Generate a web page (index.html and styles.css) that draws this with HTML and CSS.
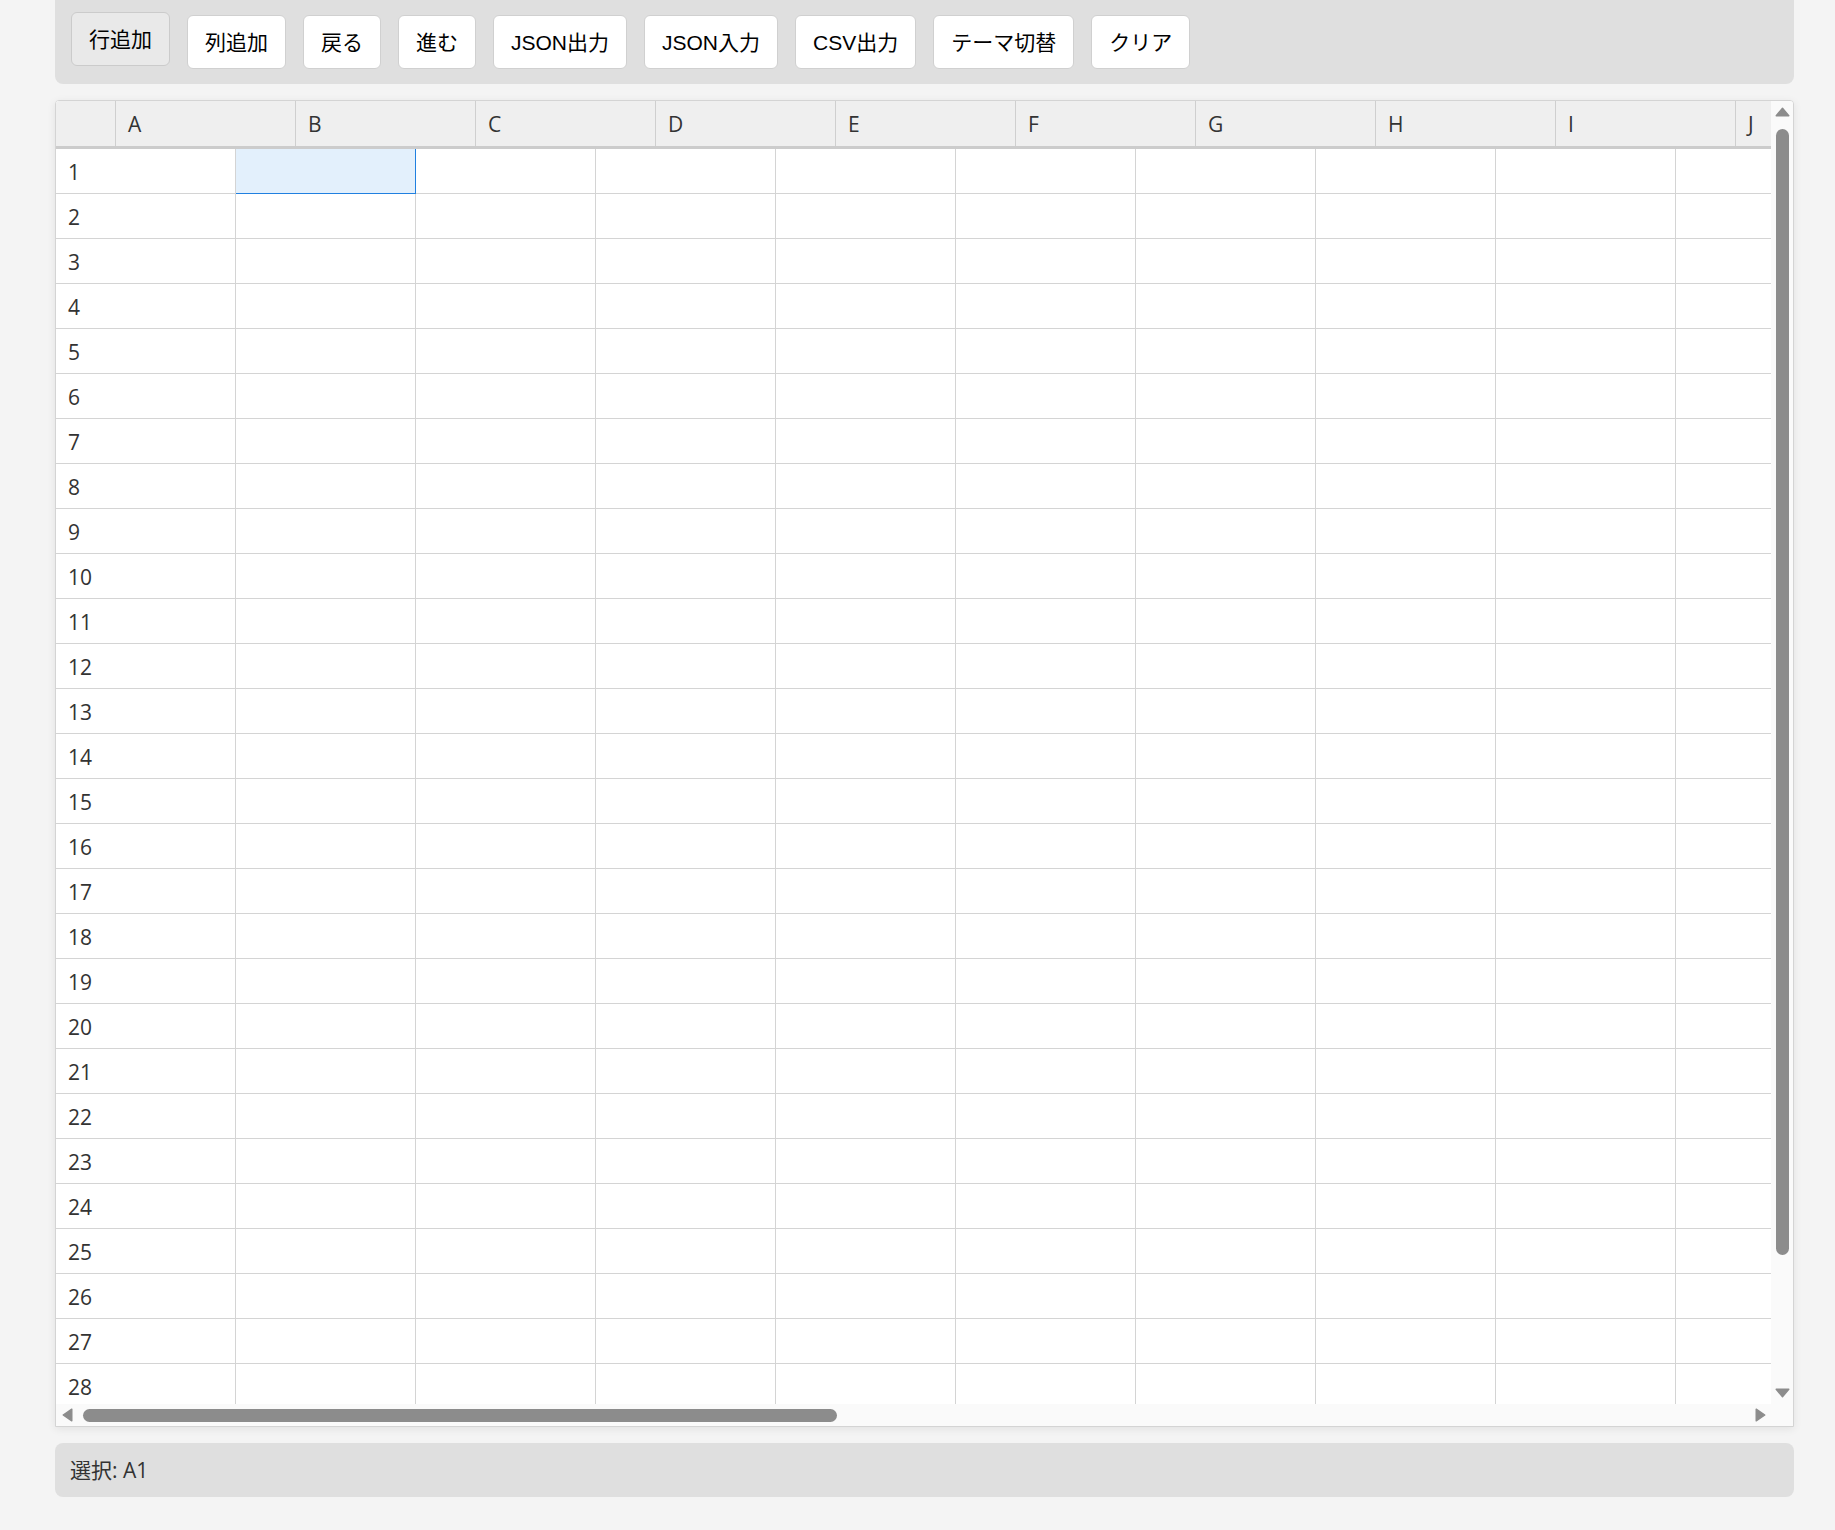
FILE: index.html
```html
<!DOCTYPE html>
<html lang="ja">
<head>
<meta charset="utf-8">
<title>スプレッドシート</title>
<link rel="stylesheet" href="styles.css">
</head>
<body>
<div class="app">
  <div class="toolbar">
    <button class="btn is-pressed">行追加</button>
    <button class="btn">列追加</button>
    <button class="btn">戻る</button>
    <button class="btn">進む</button>
    <button class="btn">JSON出力</button>
    <button class="btn">JSON入力</button>
    <button class="btn">CSV出力</button>
    <button class="btn">テーマ切替</button>
    <button class="btn">クリア</button>
  </div>

  <div class="sheet">
    <div class="viewport">
      <div class="head">
        <div class="corner"></div>
        <div class="hcell">A</div><div class="hcell">B</div><div class="hcell">C</div><div class="hcell">D</div><div class="hcell">E</div><div class="hcell">F</div><div class="hcell">G</div><div class="hcell">H</div><div class="hcell">I</div><div class="hcell">J</div>
      </div>
      <div class="row"><div class="rnum">1</div><div class="cell sel"></div><div class="cell"></div><div class="cell"></div><div class="cell"></div><div class="cell"></div><div class="cell"></div><div class="cell"></div><div class="cell"></div><div class="cell"></div><div class="cell"></div></div>
      <div class="row"><div class="rnum">2</div><div class="cell"></div><div class="cell"></div><div class="cell"></div><div class="cell"></div><div class="cell"></div><div class="cell"></div><div class="cell"></div><div class="cell"></div><div class="cell"></div><div class="cell"></div></div>
      <div class="row"><div class="rnum">3</div><div class="cell"></div><div class="cell"></div><div class="cell"></div><div class="cell"></div><div class="cell"></div><div class="cell"></div><div class="cell"></div><div class="cell"></div><div class="cell"></div><div class="cell"></div></div>
      <div class="row"><div class="rnum">4</div><div class="cell"></div><div class="cell"></div><div class="cell"></div><div class="cell"></div><div class="cell"></div><div class="cell"></div><div class="cell"></div><div class="cell"></div><div class="cell"></div><div class="cell"></div></div>
      <div class="row"><div class="rnum">5</div><div class="cell"></div><div class="cell"></div><div class="cell"></div><div class="cell"></div><div class="cell"></div><div class="cell"></div><div class="cell"></div><div class="cell"></div><div class="cell"></div><div class="cell"></div></div>
      <div class="row"><div class="rnum">6</div><div class="cell"></div><div class="cell"></div><div class="cell"></div><div class="cell"></div><div class="cell"></div><div class="cell"></div><div class="cell"></div><div class="cell"></div><div class="cell"></div><div class="cell"></div></div>
      <div class="row"><div class="rnum">7</div><div class="cell"></div><div class="cell"></div><div class="cell"></div><div class="cell"></div><div class="cell"></div><div class="cell"></div><div class="cell"></div><div class="cell"></div><div class="cell"></div><div class="cell"></div></div>
      <div class="row"><div class="rnum">8</div><div class="cell"></div><div class="cell"></div><div class="cell"></div><div class="cell"></div><div class="cell"></div><div class="cell"></div><div class="cell"></div><div class="cell"></div><div class="cell"></div><div class="cell"></div></div>
      <div class="row"><div class="rnum">9</div><div class="cell"></div><div class="cell"></div><div class="cell"></div><div class="cell"></div><div class="cell"></div><div class="cell"></div><div class="cell"></div><div class="cell"></div><div class="cell"></div><div class="cell"></div></div>
      <div class="row"><div class="rnum">10</div><div class="cell"></div><div class="cell"></div><div class="cell"></div><div class="cell"></div><div class="cell"></div><div class="cell"></div><div class="cell"></div><div class="cell"></div><div class="cell"></div><div class="cell"></div></div>
      <div class="row"><div class="rnum">11</div><div class="cell"></div><div class="cell"></div><div class="cell"></div><div class="cell"></div><div class="cell"></div><div class="cell"></div><div class="cell"></div><div class="cell"></div><div class="cell"></div><div class="cell"></div></div>
      <div class="row"><div class="rnum">12</div><div class="cell"></div><div class="cell"></div><div class="cell"></div><div class="cell"></div><div class="cell"></div><div class="cell"></div><div class="cell"></div><div class="cell"></div><div class="cell"></div><div class="cell"></div></div>
      <div class="row"><div class="rnum">13</div><div class="cell"></div><div class="cell"></div><div class="cell"></div><div class="cell"></div><div class="cell"></div><div class="cell"></div><div class="cell"></div><div class="cell"></div><div class="cell"></div><div class="cell"></div></div>
      <div class="row"><div class="rnum">14</div><div class="cell"></div><div class="cell"></div><div class="cell"></div><div class="cell"></div><div class="cell"></div><div class="cell"></div><div class="cell"></div><div class="cell"></div><div class="cell"></div><div class="cell"></div></div>
      <div class="row"><div class="rnum">15</div><div class="cell"></div><div class="cell"></div><div class="cell"></div><div class="cell"></div><div class="cell"></div><div class="cell"></div><div class="cell"></div><div class="cell"></div><div class="cell"></div><div class="cell"></div></div>
      <div class="row"><div class="rnum">16</div><div class="cell"></div><div class="cell"></div><div class="cell"></div><div class="cell"></div><div class="cell"></div><div class="cell"></div><div class="cell"></div><div class="cell"></div><div class="cell"></div><div class="cell"></div></div>
      <div class="row"><div class="rnum">17</div><div class="cell"></div><div class="cell"></div><div class="cell"></div><div class="cell"></div><div class="cell"></div><div class="cell"></div><div class="cell"></div><div class="cell"></div><div class="cell"></div><div class="cell"></div></div>
      <div class="row"><div class="rnum">18</div><div class="cell"></div><div class="cell"></div><div class="cell"></div><div class="cell"></div><div class="cell"></div><div class="cell"></div><div class="cell"></div><div class="cell"></div><div class="cell"></div><div class="cell"></div></div>
      <div class="row"><div class="rnum">19</div><div class="cell"></div><div class="cell"></div><div class="cell"></div><div class="cell"></div><div class="cell"></div><div class="cell"></div><div class="cell"></div><div class="cell"></div><div class="cell"></div><div class="cell"></div></div>
      <div class="row"><div class="rnum">20</div><div class="cell"></div><div class="cell"></div><div class="cell"></div><div class="cell"></div><div class="cell"></div><div class="cell"></div><div class="cell"></div><div class="cell"></div><div class="cell"></div><div class="cell"></div></div>
      <div class="row"><div class="rnum">21</div><div class="cell"></div><div class="cell"></div><div class="cell"></div><div class="cell"></div><div class="cell"></div><div class="cell"></div><div class="cell"></div><div class="cell"></div><div class="cell"></div><div class="cell"></div></div>
      <div class="row"><div class="rnum">22</div><div class="cell"></div><div class="cell"></div><div class="cell"></div><div class="cell"></div><div class="cell"></div><div class="cell"></div><div class="cell"></div><div class="cell"></div><div class="cell"></div><div class="cell"></div></div>
      <div class="row"><div class="rnum">23</div><div class="cell"></div><div class="cell"></div><div class="cell"></div><div class="cell"></div><div class="cell"></div><div class="cell"></div><div class="cell"></div><div class="cell"></div><div class="cell"></div><div class="cell"></div></div>
      <div class="row"><div class="rnum">24</div><div class="cell"></div><div class="cell"></div><div class="cell"></div><div class="cell"></div><div class="cell"></div><div class="cell"></div><div class="cell"></div><div class="cell"></div><div class="cell"></div><div class="cell"></div></div>
      <div class="row"><div class="rnum">25</div><div class="cell"></div><div class="cell"></div><div class="cell"></div><div class="cell"></div><div class="cell"></div><div class="cell"></div><div class="cell"></div><div class="cell"></div><div class="cell"></div><div class="cell"></div></div>
      <div class="row"><div class="rnum">26</div><div class="cell"></div><div class="cell"></div><div class="cell"></div><div class="cell"></div><div class="cell"></div><div class="cell"></div><div class="cell"></div><div class="cell"></div><div class="cell"></div><div class="cell"></div></div>
      <div class="row"><div class="rnum">27</div><div class="cell"></div><div class="cell"></div><div class="cell"></div><div class="cell"></div><div class="cell"></div><div class="cell"></div><div class="cell"></div><div class="cell"></div><div class="cell"></div><div class="cell"></div></div>
      <div class="row"><div class="rnum">28</div><div class="cell"></div><div class="cell"></div><div class="cell"></div><div class="cell"></div><div class="cell"></div><div class="cell"></div><div class="cell"></div><div class="cell"></div><div class="cell"></div><div class="cell"></div></div>
    </div>

    <div class="vbar">
      <div class="arrow"><svg width="15" height="10" viewBox="0 0 15 10"><path d="M7.5 1.2 L13.8 8.8 H1.2 Z" fill="#8c8c8c" stroke="#8c8c8c" stroke-width="1.4" stroke-linejoin="round"/></svg></div>
      <div class="vthumb"></div>
      <div class="spacer"></div>
      <div class="arrow"><svg width="15" height="10" viewBox="0 0 15 10"><path d="M1.2 1.2 H13.8 L7.5 8.8 Z" fill="#8c8c8c" stroke="#8c8c8c" stroke-width="1.4" stroke-linejoin="round"/></svg></div>
    </div>

    <div class="hbar">
      <div class="arrow"><svg width="11" height="14" viewBox="0 0 11 14"><path d="M1.2 7 L9.8 1.2 V12.8 Z" fill="#8c8c8c" stroke="#8c8c8c" stroke-width="1.4" stroke-linejoin="round"/></svg></div>
      <div class="hthumb"></div>
      <div class="spacer"></div>
      <div class="arrow"><svg width="11" height="14" viewBox="0 0 11 14"><path d="M1.2 1.2 L9.8 7 L1.2 12.8 Z" fill="#8c8c8c" stroke="#8c8c8c" stroke-width="1.4" stroke-linejoin="round"/></svg></div>
    </div>

    <div class="sb-corner"></div>
  </div>

  <div class="status">選択: A1</div>
</div>
</body>
</html>
```

FILE: styles.css
```css
* {
  box-sizing: border-box;
}

html,
body {
  margin: 0;
  padding: 0;
}

body {
  background: #f4f4f4;
  font-family: "Open Sans", "Noto Sans CJK JP", sans-serif;
  color: #333;
}

.app {
  margin-left: 55px;
  width: 1739px;
  display: flex;
  flex-direction: column;
  gap: 16px;
}

/* Toolbar */
.toolbar {
  background: #dfdfdf;
  border-radius: 0 0 8px 8px;
  padding: 15px 16px;
  display: flex;
  align-items: flex-start;
  gap: 17px;
}

.btn {
  margin: 0;
  height: 54px;
  padding: 15px 17px 13px;
  font-family: "Liberation Sans", "Noto Sans CJK JP", sans-serif;
  font-size: 21px;
  line-height: 24px;
  color: #000;
  background: #fff;
  border: 1px solid #d0d0d0;
  border-radius: 6px;
  white-space: nowrap;
}

.btn.is-pressed {
  background: #e9e9e9;
  border-color: #cbcbcb;
  transform: translateY(-3px);
}

/* Sheet */
.sheet {
  height: 1327px;
  border: 1px solid #d4d4d4;
  border-radius: 4px 4px 0 0;
  background: #fafafa;
  box-shadow: 0 2px 8px rgba(0, 0, 0, 0.08);
  display: grid;
  grid-template-columns: minmax(0, 1fr) 22px;
  grid-template-rows: minmax(0, 1fr) 22px;
  overflow: hidden;
}

.viewport {
  overflow: hidden;
  background: #fff;
  min-width: 0;
  min-height: 0;
}

.head {
  display: flex;
  height: 48px;
  width: max-content;
  min-width: 100%;
  background: #efefef;
  border-bottom: 3px solid #cccccc;
}

.corner {
  flex: none;
  width: 60px;
  border-right: 1px solid #cfcfcf;
}

.hcell {
  flex: none;
  width: 180px;
  padding: 2px 0 0 12px;
  border-right: 1px solid #cfcfcf;
  font-size: 21px;
  line-height: 43px;
  color: #333;
}

.row {
  display: flex;
  height: 45px;
}

.rnum,
.cell {
  flex: none;
  width: 180px;
  height: 45px;
  border-right: 1px solid #d4d4d4;
  border-bottom: 1px solid #d4d4d4;
  background: #fff;
}

.rnum {
  padding: 2px 0 0 12px;
  font-size: 21px;
  line-height: 42px;
  color: #333;
}

.cell.sel {
  background: #e3f0fc;
  border-right-color: #2080e0;
  border-bottom-color: #2080e0;
}

/* Scrollbars */
.vbar {
  display: flex;
  flex-direction: column;
  align-items: center;
  background: #fafafa;
}

.hbar {
  display: flex;
  align-items: center;
  background: #fafafa;
}

.arrow {
  flex: none;
  width: 22px;
  height: 22px;
  display: flex;
  align-items: center;
  justify-content: center;
}

.arrow svg {
  display: block;
}

.spacer {
  flex: 1;
}

.vthumb {
  flex: none;
  width: 13px;
  height: 1126px;
  margin-top: 6px;
  border-radius: 7px;
  background: #8c8c8c;
}

.hthumb {
  flex: none;
  width: 754px;
  height: 13px;
  margin-left: 5px;
  border-radius: 7px;
  background: #8c8c8c;
}

.sb-corner {
  background: #fafafa;
}

/* Status bar */
.status {
  height: 54px;
  padding: 1px 15px 0;
  background: #dfdfdf;
  border-radius: 8px;
  font-size: 21px;
  line-height: 53px;
  color: #333;
}
```
